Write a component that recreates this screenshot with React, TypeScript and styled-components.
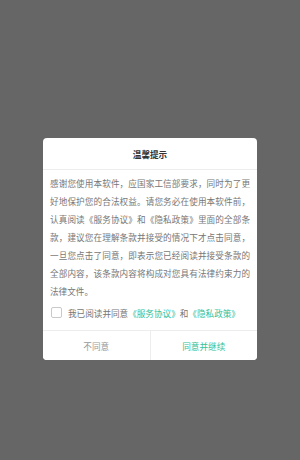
import React, { useState } from "react";
import styled, { createGlobalStyle } from "styled-components";

const GlobalStyle = createGlobalStyle`
  html, body {
    margin: 0;
    padding: 0;
    background: #666666;
  }
  body {
    font-family: "Noto Sans CJK SC", "Noto Sans", sans-serif;
  }
`;

const GREEN = "#33c29b";

const Overlay = styled.div`
  width: 300px;
  height: 460px;
  box-sizing: border-box;
  padding-top: 138px;
  display: flex;
  justify-content: center;
  align-items: flex-start;
  background: #666666;
`;

const Dialog = styled.div`
  width: 214px;
  background: #ffffff;
  border-radius: 4px;
  overflow: hidden;
`;

const Header = styled.div`
  height: 31px;
  display: flex;
  align-items: center;
  justify-content: center;
  border-bottom: 1px solid #ededed;
  font-size: 8.6px;
  font-weight: bold;
  color: #333333;
`;

const Body = styled.div`
  padding: 4px 7px 8px;
`;

const Paragraph = styled.p`
  margin: 0;
  font-size: 8.6px;
  line-height: 18px;
  color: #777777;
  text-align: justify;
`;

const AgreeRow = styled.label`
  margin-top: 3px;
  height: 19px;
  display: flex;
  align-items: center;
  gap: 6px;
  font-size: 8.6px;
  color: #777777;
  cursor: pointer;
`;

const Box = styled.span<{ checked: boolean }>`
  width: 11px;
  height: 11px;
  margin-left: 1px;
  box-sizing: border-box;
  border: 1px solid #c9c9c9;
  border-radius: 2px;
  background: ${(p) => (p.checked ? GREEN : "#fff")};
  border-color: ${(p) => (p.checked ? GREEN : "#c9c9c9")};
`;

const Link = styled.span`
  color: ${GREEN};
`;

const Footer = styled.div`
  display: flex;
  border-top: 1px solid #ededed;
`;

const FooterButton = styled.button<{ primary?: boolean }>`
  flex: 1;
  height: 29px;
  border: none;
  background: #fff;
  padding: 0;
  font-family: inherit;
  font-size: 8.6px;
  color: ${(p) => (p.primary ? GREEN : "#999999")};
  & + & {
    border-left: 1px solid #ededed;
  }
`;

export default function App() {
  const [checked, setChecked] = useState(false);
  return (
    <>
      <GlobalStyle />
      <Overlay>
        <Dialog>
          <Header>温馨提示</Header>
          <Body>
            <Paragraph>
              感谢您使用本软件，应国家工信部要求，同时为了更好地保护您的合法权益。请您务必在使用本软件前，认真阅读《服务协议》和《隐私政策》里面的全部条款，建议您在理解条款并接受的情况下才点击同意，一旦您点击了同意，即表示您已经阅读并接受条款的全部内容，该条款内容将构成对您具有法律约束力的法律文件。
            </Paragraph>
            <AgreeRow onClick={() => setChecked((c) => !c)}>
              <Box checked={checked} />
              <span>
                我已阅读并同意<Link>《服务协议》</Link>和<Link>《隐私政策》</Link>
              </span>
            </AgreeRow>
          </Body>
          <Footer>
            <FooterButton>不同意</FooterButton>
            <FooterButton primary>同意并继续</FooterButton>
          </Footer>
        </Dialog>
      </Overlay>
    </>
  );
}
